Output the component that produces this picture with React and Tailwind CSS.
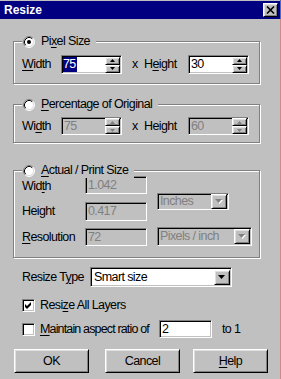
import React from 'react';

const sunken =
  'border border-t-[#808080] border-l-[#808080] border-b-white border-r-white shadow-[inset_1px_1px_0_#000,inset_-1px_-1px_0_#c0c0c0]';
const raised =
  'border border-t-white border-l-white border-b-black border-r-black shadow-[inset_1px_1px_0_#dfdfdf,inset_-1px_-1px_0_#808080]';

const U = ({ children }) => <span className="underline decoration-1 underline-offset-[2px]">{children}</span>;

function Radio({ checked }) {
  return (
    <svg width="12" height="12" viewBox="0 0 12 12" className="shrink-0">
      <circle cx="6" cy="6" r="5" fill="#fff" />
      <path d="M2.11 9.89A5.5 5.5 0 0 1 9.89 2.11" fill="none" stroke="#808080" />
      <path d="M9.89 2.11A5.5 5.5 0 0 1 2.11 9.89" fill="none" stroke="#fff" />
      <path d="M2.82 9.18A4.5 4.5 0 0 1 9.18 2.82" fill="none" stroke="#000" />
      <path d="M9.18 2.82A4.5 4.5 0 0 1 2.82 9.18" fill="none" stroke="#dfdfdf" />
      {checked && <circle cx="6" cy="6" r="2" fill="#000" />}
    </svg>
  );
}

function Check({ checked }) {
  return (
    <div className={`w-[13px] h-[13px] shrink-0 bg-white flex items-center justify-center ${sunken}`}>
      {checked && (
        <svg width="9" height="9" viewBox="0 0 9 9">
          <polygon points="1,3 3,5 7,1 7,4 3,8 1,6" fill="#000" />
        </svg>
      )}
    </div>
  );
}

function Spin({ disabled }) {
  const c = disabled ? '#808080' : '#000';
  return (
    <div className="ml-auto mr-[1px] flex flex-col">
      <div className={`w-[15px] h-[8px] bg-[#c0c0c0] flex items-center justify-center ${raised}`}>
        <svg width="5" height="3" viewBox="0 0 5 3">
          <path d="M2.5 0L5 3H0Z" fill={c} />
        </svg>
      </div>
      <div className={`w-[15px] h-[8px] bg-[#c0c0c0] flex items-center justify-center ${raised}`}>
        <svg width="5" height="3" viewBox="0 0 5 3">
          <path d="M0 0H5L2.5 3Z" fill={c} />
        </svg>
      </div>
    </div>
  );
}

function Arrow({ disabled }) {
  return (
    <div className={`ml-auto mr-[1px] w-[16px] h-[15px] shrink-0 bg-[#c0c0c0] flex items-center justify-center ${raised}`}>
      <svg width="8" height="5" viewBox="0 0 8 5">
        {disabled && <path d="M1 1H8L4.5 5Z" fill="#fff" />}
        <path d="M0 0H7L3.5 4Z" fill={disabled ? '#808080' : '#000'} />
      </svg>
    </div>
  );
}

function Group({ className, legend, checked, children }) {
  return (
    <div className={`relative ml-[13px] w-[247px] border border-[#808080] shadow-[1px_1px_0_#fff,inset_1px_1px_0_#fff] ${className}`}>
      <div className="absolute left-[8px] top-[-8px] h-[15px] flex items-center gap-[6px] bg-[#c0c0c0] pl-[1px] pr-[6px]">
        <Radio checked={checked} />
        <span>{legend}</span>
      </div>
      {children}
    </div>
  );
}

function Button({ children }) {
  return (
    <div className={`w-[75px] h-[24px] bg-[#c0c0c0] flex items-center justify-center ${raised}`}>{children}</div>
  );
}

export default function App() {
  return (
    <div className="w-[281px] h-[379px] overflow-hidden bg-[#c0c0c0] flex whitespace-nowrap font-['Liberation_Sans',Arial,sans-serif] text-[12.5px] tracking-[-0.6px] text-black">
      <div className="w-[280px] pt-[1px]">
        {/* title bar */}
        <div className="h-[18px] bg-[#000080] flex items-center pl-[4px] pr-[2px]">
          <span className="text-white font-bold text-[12px] tracking-normal">Resize</span>
          <div className={`ml-auto w-[15px] h-[14px] bg-[#c0c0c0] flex items-center justify-center ${raised}`}>
            <svg width="9" height="8" viewBox="0 0 9 8">
              <path d="M1 0.5L8 7.5M8 0.5L1 7.5" stroke="#000" strokeWidth="1.6" />
            </svg>
          </div>
        </div>

        {/* pixel size */}
        <Group className="mt-[22px] h-[43px] pt-[13px]" legend={<>Pi<U>x</U>el Size</>} checked>
          <div className="flex items-center pl-[8px]">
            <span className="w-[39px]"><U>W</U>idth</span>
            <div className={`w-[61px] h-[19px] bg-white flex items-center pl-[1px] ${sunken}`}>
              <span className="bg-[#000080] text-white h-[15px] leading-[15px] pr-[1px]">75</span>
              <Spin />
            </div>
            <span className="ml-[10px] w-[12px]">x</span>
            <span className="w-[44px]">H<U>e</U>ight</span>
            <div className={`w-[61px] h-[19px] bg-white flex items-center pl-[2px] ${sunken}`}>
              <span>30</span>
              <Spin />
            </div>
          </div>
        </Group>

        {/* percentage */}
        <Group className="mt-[20px] h-[39px] pt-[12px]" legend={<><U>P</U>ercentage of Original</>}>
          <div className="flex items-center pl-[8px]">
            <span className="w-[39px]">Wi<U>d</U>th</span>
            <div className={`w-[61px] h-[18px] bg-[#c0c0c0] text-[#808080] flex items-center pl-[2px] ${sunken}`}>
              <span>75</span>
              <Spin disabled />
            </div>
            <span className="ml-[10px] w-[12px]">x</span>
            <span className="w-[44px]">Height</span>
            <div className={`w-[61px] h-[18px] bg-[#c0c0c0] text-[#808080] flex items-center pl-[2px] ${sunken}`}>
              <span>60</span>
              <Spin disabled />
            </div>
          </div>
        </Group>

        {/* actual / print */}
        <Group className="mt-[27px] h-[88px] pt-[5px]" legend={<><U>A</U>ctual / Print Size</>}>
          <div className="flex pl-[8px]">
            <div className="flex flex-col gap-[8px]">
              <div className="flex items-center h-[18px]">
                <span className="w-[63px] pt-[2px]">Wid<U>t</U>h</span>
                <div className={`w-[62px] h-[18px] bg-[#c0c0c0] text-[#808080] flex items-center pl-[2px] ${sunken}`}>1.042</div>
              </div>
              <div className="flex items-center h-[18px]">
                <span className="w-[63px] pt-[1px]">Height</span>
                <div className={`w-[62px] h-[19px] bg-[#c0c0c0] text-[#808080] flex items-center pl-[2px] ${sunken}`}>0.417</div>
              </div>
              <div className="flex items-center h-[18px]">
                <span className="w-[63px] pt-[1px]"><U>R</U>esolution</span>
                <div className={`w-[62px] h-[18px] bg-[#c0c0c0] text-[#808080] flex items-center pl-[2px] ${sunken}`}>72</div>
              </div>
            </div>
            <div className="ml-[10px] flex flex-col">
              <div className={`mt-[17px] w-[72px] h-[17px] bg-[#c0c0c0] text-[#808080] flex items-center pl-[2px] ${sunken}`}>
                <span>Inches</span>
                <Arrow disabled />
              </div>
              <div className={`mt-[17px] w-[95px] h-[19px] bg-[#c0c0c0] text-[#808080] flex items-center pl-[2px] ${sunken}`}>
                <span>Pixels / inch</span>
                <Arrow disabled />
              </div>
            </div>
          </div>
        </Group>

        {/* resize type */}
        <div className="mt-[9px] ml-[22px] flex items-center">
          <span className="w-[68px]">Resize T<U>y</U>pe</span>
          <div className={`w-[142px] h-[20px] bg-white flex items-center pl-[3px] ${sunken}`}>
            <span>Smart size</span>
            <Arrow />
          </div>
        </div>

        <div className="mt-[12px] ml-[22px] h-[13px] flex items-center">
          <Check checked />
          <span className="ml-[5px]">Resi<U>z</U>e All Layers</span>
        </div>

        <div className="mt-[8px] ml-[22px] h-[18px] flex items-center">
          <Check />
          <span className="ml-[5px] w-[119px] tracking-[-0.85px]"><U>M</U>aintain aspect ratio of</span>
          <div className={`w-[53px] h-[18px] bg-white flex items-center pl-[2px] ${sunken}`}>2</div>
          <span className="ml-[10px]">to 1</span>
        </div>

        {/* buttons */}
        <div className="mt-[11px] ml-[14px] flex">
          <Button>OK</Button>
          <div className="ml-[16px]">
            <Button>Cancel</Button>
          </div>
          <div className="ml-[13px]">
            <Button><U>H</U>elp</Button>
          </div>
        </div>
      </div>
      <div className="w-[1px] flex flex-col">
        <div className="h-[19px] bg-[#4a6ac8]" />
        <div className="flex-1 bg-[#d08888]" />
      </div>
    </div>
  );
}
